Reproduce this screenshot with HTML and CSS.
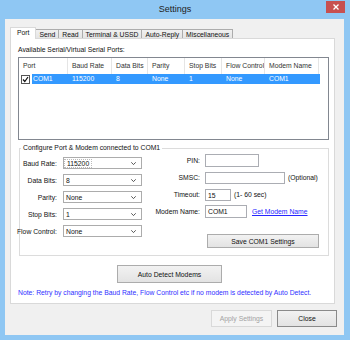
FILE: index.html
```html
<!DOCTYPE html>
<html lang="en">
<head>
    <meta charset="UTF-8">
    <meta name="viewport" content="width=device-width, initial-scale=1.0">
    <title>Settings</title>
    <link rel="stylesheet" href="styles.css">
</head>
<body>
    <div class="titlebar">
        <span></span>
        <span class="title">Settings</span>
        <span class="close-x">
            <svg width="6" height="6" viewBox="0 0 6 6"><path d="M0.5 0.5 L5.5 5.5 M5.5 0.5 L0.5 5.5" stroke="#fff" stroke-width="1.3"/></svg>
        </span>
    </div>

    <div class="client">
        <ul class="tabs">
            <li class="tab active">Port</li>
            <li class="tab">Send</li>
            <li class="tab">Read</li>
            <li class="tab">Terminal &amp; USSD</li>
            <li class="tab">Auto-Reply</li>
            <li class="tab">Miscellaneous</li>
        </ul>

        <div class="tab-page">
            <p class="caption">Available Serial/Virtual Serial Ports:</p>

            <div class="listview">
                <div class="lv-header">
                    <span>Port</span>
                    <span>Baud Rate</span>
                    <span>Data Bits</span>
                    <span>Parity</span>
                    <span>Stop Bits</span>
                    <span>Flow Control</span>
                    <span>Modem Name</span>
                </div>
                <div class="lv-row">
                    <span class="check">
                        <svg width="7" height="7" viewBox="0 0 7 7"><path d="M1 3.5 L2.8 5.5 L6 1" fill="none" stroke="#111" stroke-width="1.2"/></svg>
                    </span>
                    <div class="lv-sel">
                        <span>COM1</span>
                        <span>115200</span>
                        <span>8</span>
                        <span>None</span>
                        <span>1</span>
                        <span>None</span>
                        <span>COM1</span>
                    </div>
                </div>
            </div>

            <fieldset class="group">
                <legend>Configure Port &amp; Modem connected to COM1</legend>
                <div class="group-body">
                    <div class="left-form">
                        <label>Baud Rate:</label>
                        <div class="combo"><span class="focus">115200</span><svg width="5" height="3" viewBox="0 0 5 3"><path d="M0.3 0.3 L2.5 2.6 L4.7 0.3" fill="none" stroke="#444" stroke-width="0.9"/></svg></div>
                        <label>Data Bits:</label>
                        <div class="combo"><span>8</span><svg width="5" height="3" viewBox="0 0 5 3"><path d="M0.3 0.3 L2.5 2.6 L4.7 0.3" fill="none" stroke="#444" stroke-width="0.9"/></svg></div>
                        <label>Parity:</label>
                        <div class="combo"><span>None</span><svg width="5" height="3" viewBox="0 0 5 3"><path d="M0.3 0.3 L2.5 2.6 L4.7 0.3" fill="none" stroke="#444" stroke-width="0.9"/></svg></div>
                        <label>Stop Bits:</label>
                        <div class="combo"><span>1</span><svg width="5" height="3" viewBox="0 0 5 3"><path d="M0.3 0.3 L2.5 2.6 L4.7 0.3" fill="none" stroke="#444" stroke-width="0.9"/></svg></div>
                        <label>Flow Control:</label>
                        <div class="combo"><span>None</span><svg width="5" height="3" viewBox="0 0 5 3"><path d="M0.3 0.3 L2.5 2.6 L4.7 0.3" fill="none" stroke="#444" stroke-width="0.9"/></svg></div>
                    </div>

                    <div class="right-form">
                        <div class="fields">
                            <label>PIN:</label>
                            <div class="field"><span class="textbox pin"></span></div>
                            <label>SMSC:</label>
                            <div class="field"><span class="textbox smsc"></span><span>(Optional)</span></div>
                            <label>Timeout:</label>
                            <div class="field"><span class="textbox timeout">15</span><span>(1- 60 sec)</span></div>
                            <label>Modem Name:</label>
                            <div class="field"><span class="textbox modem">COM1</span><a class="link" href="#">Get Modem Name</a></div>
                        </div>
                        <button class="btn save">Save COM1 Settings</button>
                    </div>
                </div>
            </fieldset>

            <button class="btn detect">Auto Detect Modems</button>
            <p class="note">Note: Retry by changing the Baud Rate, Flow Control etc if no modem is detected by Auto Detect.</p>
        </div>

        <div class="footer">
            <button class="btn apply" disabled>Apply Settings</button>
            <button class="btn close">Close</button>
        </div>
    </div>
</body>
</html>
```

FILE: styles.css
```css
html, body {
    margin: 0;
    padding: 0;
}
body {
    width: 350px;
    height: 340px;
    overflow: hidden;
    background: #8fc7f3; /* window frame */
    font-family: "Liberation Sans", Arial, sans-serif;
    font-size: 6.8px;
    color: #111;
}
.titlebar {
    height: 19px;
    display: grid;
    grid-template-columns: 1fr auto 1fr;
    align-items: start;
}
.title {
    font-size: 9px;
    line-height: 19px;
    color: #222;
}
.close-x {
    justify-self: end;
    margin: 1px 5px 0 0;
    width: 19px;
    height: 12px;
    background: #c75050;
    display: flex;
    align-items: center;
    justify-content: center;
}
.client {
    margin: 0 6px 0 5px;
    height: 316px;
    box-sizing: border-box;
    padding: 8px 9px 0 5px;
    background: #f0f0f0;
}

/* tabs */
.tabs {
    list-style: none;
    margin: 0;
    padding: 0;
    height: 11px;
    display: flex;
    align-items: flex-end;
}
.tab {
    height: 9px;
    line-height: 9px;
    padding: 0 3px;
    margin-left: -1px;
    border: 1px solid #acacac;
    border-bottom: none;
    box-sizing: border-box;
    background: linear-gradient(#f0f0f0, #e5e5e5);
    white-space: nowrap;
}
.tab.active {
    position: relative;
    z-index: 1;
    height: 12px;
    margin: 0 0 -1px 0;
    padding: 0 6px;
    line-height: 10px;
    background: #fff;
    border-color: #d9d9d9;
}
.tab-page {
    height: 266px;
    box-sizing: border-box;
    border: 1px solid #d9d9d9;
    background: #fff;
    padding: 7px 0 0 7px;
}
.caption {
    margin: 0 0 3px 0;
    line-height: 8px;
}

/* list view */
.listview {
    width: 311px;
    height: 83px;
    box-sizing: border-box;
    border: 1px solid #828790;
}
.lv-header {
    display: grid;
    grid-template-columns: 49px 44px 36px 37px 37px 43px 54px;
    height: 16px;
    line-height: 16px;
    color: #333;
}
.lv-header span {
    padding-left: 4px;
    border-right: 1px solid #e5e5e5;
    white-space: nowrap;
    overflow: hidden;
}
.lv-row {
    display: flex;
    align-items: center;
    height: 10px;
}
.check {
    width: 9px;
    height: 9px;
    box-sizing: border-box;
    margin-left: 2px;
    border: 1px solid #555;
    background: #fff;
    display: flex;
    align-items: center;
    justify-content: center;
}
.lv-sel {
    margin-left: 2px;
    width: 288px;
    height: 10px;
    line-height: 10px;
    background: #3399ff;
    color: #fff;
    display: grid;
    grid-template-columns: 36px 44px 36px 37px 37px 43px 55px;
}
.lv-sel span {
    padding-left: 4px;
    white-space: nowrap;
}
.lv-sel span:first-child {
    padding-left: 1px;
}

/* group box */
.group {
    margin: 4px 0 0 1px;
    width: 310px;
    box-sizing: border-box;
    border: 1px solid #dcdcdc;
    padding: 0 0 7px 0;
    min-width: 0;
}
.group legend {
    margin-left: 1px;
    padding: 0 2px;
    line-height: 8px;
}
.group-body {
    display: flex;
    align-items: flex-start;
}
.left-form {
    padding-top: 5px;
    display: grid;
    grid-template-columns: 37px 79px;
    grid-auto-rows: 12px;
    column-gap: 6px;
    row-gap: 5px;
}
.left-form label,
.fields label {
    justify-self: end;
    white-space: nowrap;
    align-self: center;
}
.combo {
    border: 1px solid #acacac;
    background: #fff;
    box-sizing: border-box;
    display: flex;
    align-items: center;
    justify-content: space-between;
    padding: 0 5px 0 2px;
}
.combo .focus {
    outline: 1px dotted #bbb;
    padding: 0 2px;
    margin-left: -1px;
}
.right-form {
    margin-left: 8px;
    padding-top: 2px;
}
.fields {
    display: grid;
    grid-template-columns: 50px auto;
    grid-auto-rows: 13px;
    column-gap: 5px;
    row-gap: 4px;
}
.field {
    display: flex;
    align-items: center;
    gap: 3px;
}
.textbox {
    height: 13px;
    line-height: 11px;
    box-sizing: border-box;
    border: 1px solid #abadb3;
    background: #fff;
    padding-left: 2px;
}
.textbox.smsc {
    height: 12px;
    width: 80px;
}
.textbox.pin { width: 54px; }
.textbox.timeout { width: 26px; height: 12px; }
.textbox.modem { width: 42px; }
.field .textbox.modem { margin-right: 2px; }
.link {
    color: #2626ff;
    text-decoration: underline;
}

/* buttons */
.btn {
    font-family: inherit;
    font-size: 6.8px;
    color: #111;
    border: 1px solid #acacac;
    background: linear-gradient(#f2f2f2, #e3e3e3);
    padding: 0;
    box-sizing: border-box;
}
.save {
    display: block;
    margin: 16px 0 0 57px;
    width: 112px;
    height: 14px;
}
.detect {
    display: block;
    margin: 9px 0 0 99px;
    width: 105px;
    height: 18px;
}
.note {
    margin: 6px 0 0 0;
    line-height: 8px;
    color: #3030ff;
    white-space: nowrap;
}
.footer {
    display: flex;
    justify-content: flex-end;
    gap: 5px;
    margin: 6px -2px 0 0;
}
.apply {
    width: 61px;
    height: 17px;
    color: #a3a3a3;
    border-color: #d9d9d9;
    background: #f4f4f4;
}
.close {
    width: 60px;
    height: 17px;
    border-color: #8a8a8a;
}
```
